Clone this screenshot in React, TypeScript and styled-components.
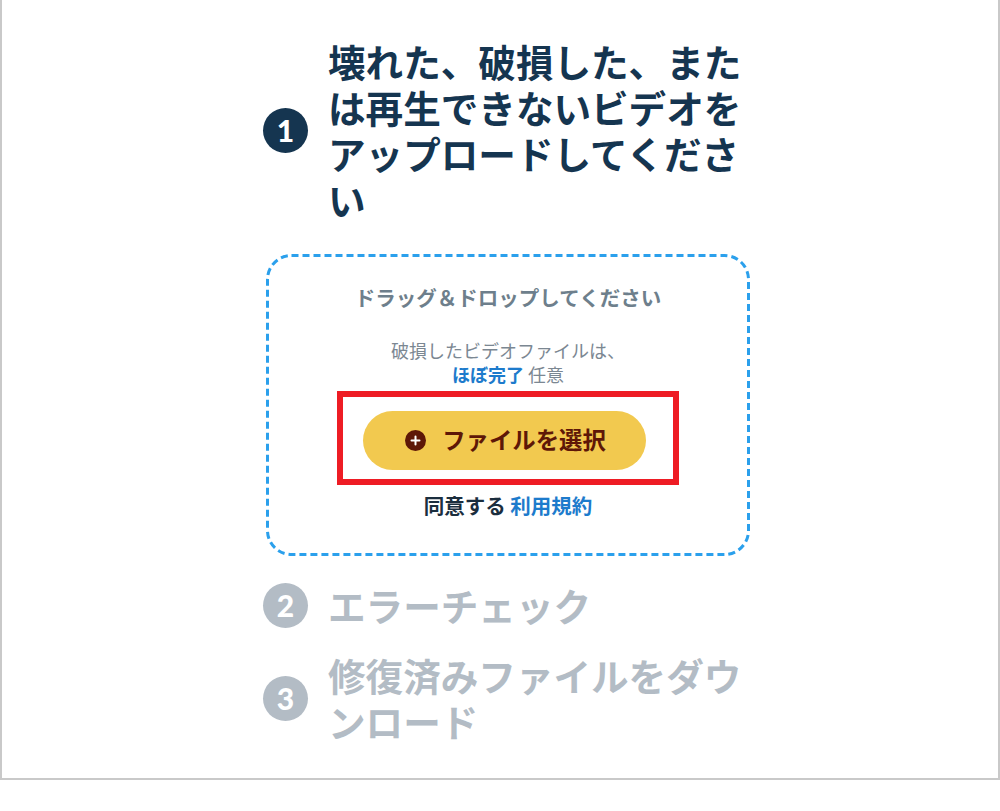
import React from 'react';
import styled, { createGlobalStyle } from 'styled-components';

const GlobalStyle = createGlobalStyle`
	html, body {
		margin: 0;
		padding: 0;
		background: #ffffff;
	}
	body {
		font-family: 'Noto Sans CJK JP', 'Noto Sans', sans-serif;
	}
`;

const dashedFrame = `url("data:image/svg+xml,${encodeURIComponent(
	`<svg xmlns='http://www.w3.org/2000/svg' width='100%' height='100%'><rect x='1.5' y='1.5' width='calc(100% - 3px)' height='calc(100% - 3px)' rx='24' ry='24' fill='none' stroke='#2ba0ec' stroke-width='3' stroke-dasharray='7 4'/></svg>`
)}")`;

const Frame = styled.div`
	box-sizing: border-box;
	width: 1000px;
	height: 780px;
	border-left: 2px solid #c9c9c9;
	border-right: 2px solid #c9c9c9;
	border-bottom: 2px solid #c9c9c9;
	background: #ffffff;
`;

const Column = styled.div`
	display: flex;
	flex-direction: column;
	width: 488px;
	margin-left: 261px;
	padding-top: 38px;
`;

const Step = styled.div<{ $gap?: number }>`
	display: flex;
	align-items: center;
	gap: 20px;
	margin-top: ${({ $gap }) => $gap ?? 0}px;
`;

const StepNumber = styled.div<{ $active?: boolean }>`
	flex: none;
	width: 45px;
	height: 45px;
	border-radius: 50%;
	background: ${({ $active }) => ($active ? '#153550' : '#b3bcc5')};
	color: #ffffff;
	display: flex;
	align-items: center;
	justify-content: center;
	font-family: 'Lato', 'Noto Sans', sans-serif;
	font-weight: 900;
	font-size: 30px;
	line-height: 1;
`;

const StepTitle = styled.h2<{ $active?: boolean }>`
	margin: 0;
	width: 423px;
	font-size: 37.6px;
	line-height: 46px;
	font-weight: 700;
	color: ${({ $active }) => ($active ? '#153550' : '#b3bcc5')};
	word-break: break-all;
`;

const DropZone = styled.div`
	box-sizing: border-box;
	margin-top: 32px;
	margin-left: 3px;
	width: 484px;
	height: 302px;
	background-image: ${dashedFrame};
	background-repeat: no-repeat;
	display: flex;
	flex-direction: column;
	align-items: center;
	padding-top: 30px;
`;

const DropTitle = styled.div`
	font-size: 20.5px;
	line-height: 26px;
	font-weight: 700;
	color: #6e7f8c;
`;

const Hint = styled.p`
	margin: 28px 0 0;
	text-align: center;
	font-size: 18px;
	line-height: 24px;
	color: #7b8792;
`;

const Strong = styled.span<{ $color: string }>`
	font-weight: 700;
	color: ${({ $color }) => $color};
`;

const Highlight = styled.div`
	box-sizing: border-box;
	margin-top: 5px;
	width: 342px;
	height: 94px;
	border: 6px solid #ee1c24;
	display: flex;
	align-items: center;
	justify-content: center;
`;

const PickButton = styled.button`
	width: 283px;
	height: 59px;
	margin: 5px 7px 0 0;
	border: none;
	border-radius: 30px;
	background: #f2c94f;
	color: #5e1707;
	display: flex;
	align-items: center;
	justify-content: center;
	gap: 16px;
	padding: 0 0 4px 2px;
	font-family: 'Noto Sans CJK JP', 'Noto Sans', sans-serif;
	font-size: 23.4px;
	font-weight: 700;
	cursor: pointer;
`;

const PlusIcon = styled.span`
	width: 21px;
	height: 21px;
	margin-top: 4px;
	border-radius: 50%;
	background: #5e1707;
	display: flex;
	align-items: center;
	justify-content: center;
`;

const Terms = styled.div`
	margin-top: 7px;
	font-size: 20.5px;
	line-height: 26px;
	font-weight: 700;
	color: #1b2e3e;
`;

export default function App() {
	return (
		<>
			<GlobalStyle />
			<Frame>
				<Column>
					<Step>
						<StepNumber $active>1</StepNumber>
						<StepTitle $active>壊れた、破損した、または再生できないビデオをアップロードしてください</StepTitle>
					</Step>
					<DropZone>
						<DropTitle>ドラッグ＆ドロップしてください</DropTitle>
						<Hint>
							破損したビデオファイルは、
							<br />
							<Strong $color="#1d7bcc">ほぼ完了</Strong> 任意
						</Hint>
						<Highlight>
							<PickButton type="button">
								<PlusIcon>
									<svg width="11" height="11" viewBox="0 0 11 11">
										<path d="M5.5 1.5v8M1.5 5.5h8" stroke="#ffffff" strokeWidth="2" strokeLinecap="round" />
									</svg>
								</PlusIcon>
								ファイルを選択
							</PickButton>
						</Highlight>
						<Terms>
							同意する <Strong $color="#1d7bcc">利用規約</Strong>
						</Terms>
					</DropZone>
					<Step $gap={26}>
						<StepNumber>2</StepNumber>
						<StepTitle>エラーチェック</StepTitle>
					</Step>
					<Step $gap={24}>
						<StepNumber>3</StepNumber>
						<StepTitle>修復済みファイルをダウンロード</StepTitle>
					</Step>
				</Column>
			</Frame>
		</>
	);
}
